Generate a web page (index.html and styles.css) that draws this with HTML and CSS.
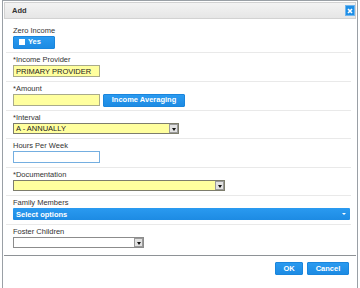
FILE: index.html
```html
<!DOCTYPE html>
<html>
<head>
<meta charset="utf-8">
<link rel="stylesheet" href="styles.css">
</head>
<body>
<div class="dialog">
  <div class="titlebar">
    <span class="title">Add</span>
    <button class="close" type="button"><svg width="6" height="6" viewBox="0 0 6 6"><path d="M1 1L5 5M5 1L1 5" stroke="#fff" stroke-width="1.6"/></svg></button>
  </div>
  <div class="content">
    <div class="row">
      <div class="label">Zero Income</div>
      <div class="ctl"><button class="btn yes" type="button"><span class="box"></span>Yes</button></div>
    </div>
    <div class="row">
      <div class="label">*Income Provider</div>
      <div class="ctl"><input class="input req" type="text" value="PRIMARY PROVIDER"></div>
    </div>
    <div class="row">
      <div class="label">*Amount</div>
      <div class="ctl"><input class="input req" type="text" value=""><button class="btn avg" type="button">Income Averaging</button></div>
    </div>
    <div class="row short">
      <div class="label">*Interval</div>
      <div class="ctl"><div class="select req w-interval"><span class="val">A - ANNUALLY</span><span class="arrow"></span></div></div>
    </div>
    <div class="row">
      <div class="label">Hours Per Week</div>
      <div class="ctl"><input class="input plain" type="text" value=""></div>
    </div>
    <div class="row short">
      <div class="label">*Documentation</div>
      <div class="ctl"><div class="select req w-doc"><span class="val"></span><span class="arrow"></span></div></div>
    </div>
    <div class="row">
      <div class="label">Family Members</div>
      <div class="ctl"><div class="multi"><span>Select options</span><span class="tri"></span></div></div>
    </div>
    <div class="row short last">
      <div class="label">Foster Children</div>
      <div class="ctl"><div class="select w-foster"><span class="val"></span><span class="arrow"></span></div></div>
    </div>
  </div>
  <div class="footer">
    <button class="btn ok" type="button">OK</button>
    <button class="btn cancel" type="button">Cancel</button>
  </div>
</div>
</body>
</html>
```
FILE: styles.css
```css
* { box-sizing: border-box; }
html, body { margin: 0; padding: 0; background: #fff; }
body { font-family: "Liberation Sans", Arial, sans-serif; font-size: 7.5px; color: #333; }

.dialog {
  margin-left: 2px;
  width: 356px;
  height: 300px;
  border: 1px solid #9aa0a6;
  border-bottom: none;
  padding: 1px 1px 0 1px;
  background: #fff;
}

.titlebar {
  height: 17px;
  border: 1px solid #d2d2d2;
  background: linear-gradient(#f3f3f3, #e6e6e6);
  display: flex;
  align-items: center;
  justify-content: space-between;
  padding: 0 0 0 7px;
}
.title { font-weight: bold; color: #333; font-size: 7.5px; line-height: 10px; padding-top: 1px; }
.close {
  width: 10px; height: 11px;
  margin-right: 0;
  padding: 0; border: 1px solid #6fb5ee;
  background: #1f8fe6;
  display: flex; align-items: center; justify-content: center;
}

.content { padding: 5px 5px 7px 2px; }

.row {
  padding: 2px 0 4px 7px;
  border-bottom: 1px solid #e9e9e9;
}
.row.short { padding-bottom: 4px; }
.row.last { border-bottom: none; padding-bottom: 0; }

.label { height: 10px; line-height: 10px; color: #333; white-space: nowrap; }
.ctl { display: flex; align-items: center; height: 12px; gap: 3px; }
.row.short .ctl { height: 11px; }

.btn {
  font-family: "Liberation Sans", Arial, sans-serif;
  font-size: 7.5px; font-weight: bold; color: #fff;
  background: linear-gradient(#2a9af0, #1d8be3);
  border: 1px solid #1a85dc;
  border-radius: 1px;
  padding: 0;
  line-height: 10px;
  height: 12px;
  cursor: pointer;
}
.yes { width: 42px; display: flex; align-items: center; padding-left: 5px; height: 13px; }
.yes .box { width: 6px; height: 6px; background: #fff; margin-right: 3px; }
.avg { width: 82px; height: 13px; }

.input {
  height: 12px; width: 87px;
  font-family: "Liberation Sans", Arial, sans-serif;
  font-size: 7.5px; color: #222;
  padding: 0 2px; margin: 0;
  outline: none;
}
.input.req { background: #ffff9e; border: 1px solid #a9ab8a; }
.input.plain { background: #fff; border: 1px solid #74aee0; }

.select {
  height: 11px;
  display: flex; align-items: center; justify-content: space-between;
  border: 1px solid #8c8c8c;
  background: #fff;
  padding: 0 0 0 2px;
  color: #222;
}
.select.req { background: #ffff9e; border-color: #7d7d6c; }
.w-interval { width: 166px; }
.w-doc { width: 212px; }
.w-foster { width: 131px; }
.val { line-height: 9px; }
.arrow {
  width: 9px; height: 9px;
  background: #e2e2e2;
  border: 1px solid #9a9a9a;
  position: relative;
}
.arrow::after {
  content: "";
  position: absolute; left: 1.5px; top: 2.5px;
  border-left: 2.5px solid transparent;
  border-right: 2.5px solid transparent;
  border-top: 3px solid #111;
}

.multi {
  width: 337px; height: 12px;
  background: linear-gradient(#2a9af0, #1d8be3);
  border-radius: 1px;
  color: #fff; font-weight: bold;
  display: flex; align-items: center; justify-content: space-between;
  padding: 0 4px 0 3px;
}
.tri {
  width: 0; height: 0;
  border-left: 2px solid transparent;
  border-right: 2px solid transparent;
  border-top: 2.5px solid #fff;
}

.footer {
  border-top: 1px solid #8e9296;
  display: flex; justify-content: flex-end; gap: 4px;
  padding: 6px 7px 0 0;
}
.ok { width: 28px; height: 13px; }
.cancel { width: 42px; height: 13px; }
```
